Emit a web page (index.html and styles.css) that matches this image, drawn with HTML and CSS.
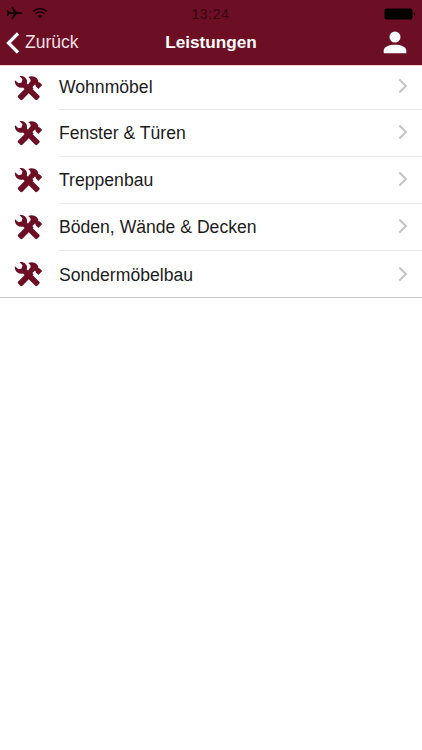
FILE: index.html
```
<!DOCTYPE html>
<html lang="de">
<head>
<meta charset="UTF-8">
<meta name="viewport" content="width=device-width, initial-scale=1.0">
<title>Leistungen</title>
<link rel="stylesheet" href="styles.css">
</head>
<body>

<!-- shared icons -->
<svg class="sprite">
  <symbol id="tools" viewBox="0 0 29 26">
    <path d="M4.2 20.6L15.2 9.4L19.6 13.2L8.4 24.8C7.6 25.4 6.8 25.2 6.1 24.6L4.2 22.6C3.6 21.9 3.6 21.2 4.2 20.6Z"/>
    <path d="M14.2 1.9C17.5.7 20.8 1.2 23 3.6L24.3 5.4L24.2 7L25.7 7.4L28.2 10L24.4 14L21.7 11.3L21.5 9.7L20.6 9.8L17.6 13L13.9 9.4L16.6 6.2C16.8 4.4 16 3.1 14.2 1.9Z"/>
    <path d="M5.4 1.1C8.8.4 12.4 2.4 13 5.9C13.1 6.8 13 7.6 12.8 8.4L25.1 20.4C25.9 21.2 25.8 22 25.2 22.7L23.2 24.7C22.5 25.4 21.7 25.3 21 24.6L9 12.5C5.6 13.4 2.2 11.7 1.1 8.2C.8 7.2.8 6.2 1 5.3L4.5 8.2L7.6 7.4L8.5 4.3Z"/>
  </symbol>
  <symbol id="arrow" viewBox="0 0 10 16">
    <path d="M1.3 1.5L8 8L1.3 14.5" fill="none" stroke="currentColor" stroke-width="2"/>
  </symbol>
</svg>

<header class="header">
  <div class="status">
    <div class="signal">
      <svg width="17" height="14" viewBox="0 0 17 14"><path d="M16.3 7C16.3 6.2 15.5 5.9 14.5 5.9H10.8L6.7.7H5.4L7.3 5.9H3.5L2 4.1H.8L1.6 7L.8 9.9H2L3.5 8.1H7.3L5.4 13.3H6.7L10.8 8.1H14.5C15.5 8.1 16.3 7.8 16.3 7Z"/></svg>
      <svg width="16" height="12" viewBox="0 0 16 12"><path d="M1 4.4Q8-1.6 15 4.4M3.4 6.8Q8 3 12.6 6.8" fill="none" stroke="currentColor" stroke-width="1.4"/><path d="M5.5 9Q8 7 10.5 9L8 11.6Z"/></svg>
    </div>
    <span class="time">13:24</span>
    <svg class="battery" width="33" height="12" viewBox="0 0 33 12"><rect x=".5" y=".5" width="28" height="11" rx="2"/><path d="M30 4Q32.4 6 30 8Z"/></svg>
  </div>
  <nav class="nav">
    <a class="back" href="#">
      <svg width="14" height="22" viewBox="0 0 14 22"><path d="M12 1.5L2.5 11L12 20.5" fill="none" stroke="currentColor" stroke-width="3.2"/></svg>
      <span>Zurück</span>
    </a>
    <h1>Leistungen</h1>
    <a class="user" href="#">
      <svg width="24" height="23" viewBox="0 0 24 23"><circle cx="12" cy="6" r="5.5"/><path d="M.7 22.3V19.5C.7 15.6 6.5 13.7 12 13.7S23.3 15.6 23.3 19.5V22.3Z"/></svg>
    </a>
  </nav>
</header>

<ul class="list">
  <li><svg class="icon"><use href="#tools"/></svg><div class="row"><span>Wohnmöbel</span><svg class="arrow"><use href="#arrow"/></svg></div></li>
  <li><svg class="icon"><use href="#tools"/></svg><div class="row"><span>Fenster &amp; Türen</span><svg class="arrow"><use href="#arrow"/></svg></div></li>
  <li><svg class="icon"><use href="#tools"/></svg><div class="row"><span>Treppenbau</span><svg class="arrow"><use href="#arrow"/></svg></div></li>
  <li><svg class="icon"><use href="#tools"/></svg><div class="row"><span>Böden, Wände &amp; Decken</span><svg class="arrow"><use href="#arrow"/></svg></div></li>
  <li><svg class="icon"><use href="#tools"/></svg><div class="row"><span>Sondermöbelbau</span><svg class="arrow"><use href="#arrow"/></svg></div></li>
</ul>

</body>
</html>
```
FILE: styles.css
```
* {
  box-sizing: border-box;
}

body {
  margin: 0;
  background: #fff;
  color: #1c1c1c;
  font-family: "Liberation Sans", Arial, sans-serif;
}

svg {
  display: block;
  fill: currentColor;
}

.sprite {
  display: none;
}

.header {
  height: 66px;
  background: #6c0f25;
  border-bottom: 1px solid #f5cbd6;
}

.status {
  display: grid;
  grid-template-columns: 1fr auto 1fr;
  align-items: center;
  height: 27px;
  padding: 0 5px 0 6px;
  color: #170207;
}

.signal {
  display: flex;
  align-items: center;
  gap: 9px;
  padding-bottom: 1px;
}

.time {
  margin-right: 2px;
  color: #35050f;
  font-size: 14px;
  letter-spacing: 0.6px;
}

.battery {
  justify-self: end;
  color: #000;
}

.nav {
  display: grid;
  grid-template-columns: 1fr auto 1fr;
  align-items: center;
  height: 31px;
  padding: 0 15px 0 6px;
  color: #fff;
}

.nav a {
  color: inherit;
  text-decoration: none;
}

.back {
  display: flex;
  align-items: center;
  gap: 5px;
  font-size: 17.5px;
}

.back span {
  color: #f3dfe4;
}

h1 {
  margin: 0 0 0 9px;
  font-size: 17.2px;
  font-weight: bold;
}

.user {
  justify-self: end;
}

.list {
  margin: 0;
  padding: 0;
  list-style: none;
  border-bottom: 1px solid #c8c8c8;
}

.list li {
  display: flex;
  align-items: center;
  height: 47px;
  padding-left: 14px;
}

.list li:first-child {
  height: 44px;
}

.list li:last-child {
  height: 46px;
}

.icon {
  width: 29px;
  height: 26px;
  margin-bottom: 1px;
  color: #6c0f25;
}

.row {
  display: flex;
  flex: 1;
  align-items: center;
  justify-content: space-between;
  height: 100%;
  margin-left: 16px;
  padding: 1px 14px 0 0;
  border-bottom: 1px solid #e9e9e9;
  font-size: 17.6px;
}

.list li:first-child .row {
  padding-top: 0;
}

.list li:last-child .row {
  padding-top: 2px;
  border-bottom: none;
}

.arrow {
  width: 10px;
  height: 16px;
  margin-bottom: 3px;
  color: #c4c4c7;
}
```
